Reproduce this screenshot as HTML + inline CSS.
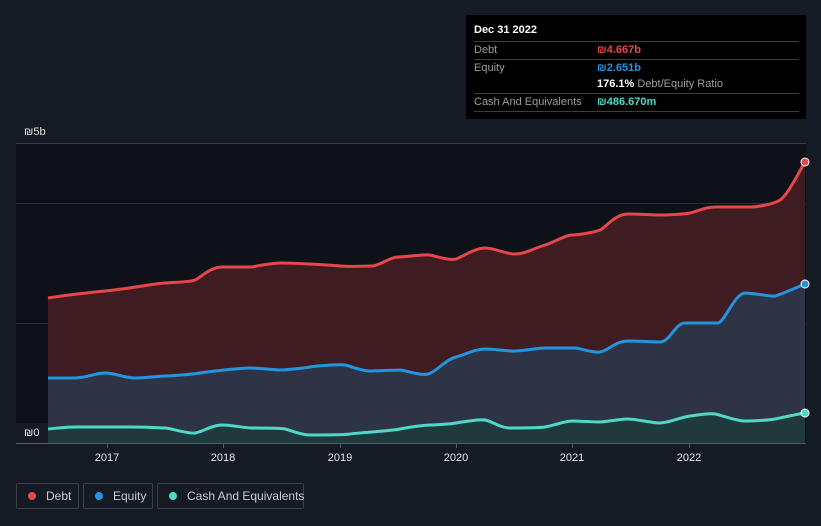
<!DOCTYPE html><html><head><style>
body{margin:0;width:821px;height:526px;background:#151b24;font-family:"Liberation Sans",sans-serif;overflow:hidden;position:relative}
.tt{position:absolute;left:466px;top:15px;width:340px;height:104px;background:#000;color:#fff;font-size:11px}
.r{position:absolute;left:8px;width:325px;border-top:1px solid #3a3d42;height:17px;line-height:17px;color:#9a9ca0}
.v{position:absolute;left:123px;font-weight:bold}
.lg{position:absolute;top:483px;height:26px;border:1px solid #3a3f48;border-radius:2px;color:#ccc;font-size:12px;line-height:24px;box-sizing:border-box;white-space:nowrap}
.lg i{display:inline-block;width:8px;height:8px;border-radius:50%;margin:0 10px 0 11px;vertical-align:0px}
</style></head><body>
<svg width="821" height="526" style="position:absolute;left:0;top:0">
<rect x="16" y="143" width="790" height="300" fill="#0e1117"/>
<line x1="16" y1="143.5" x2="806" y2="143.5" stroke="#3a3d42"/>
<line x1="16" y1="203.5" x2="806" y2="203.5" stroke="#2a2d33"/>
<line x1="16" y1="323.5" x2="806" y2="323.5" stroke="#2a2d33"/>
<path d="M48,298 C60,296 75,294 105,291 S150,284 165,283 S190,282 195,280 S210,267 222,267 S252,267 252,267 S270,263 282,263 S330,265 340,266 S365,266 372,266 S390,257 398,257 S425,254 430,255 S450,261 456,259 S475,248 485,248 S505,254 515,254 S535,248 545,245 S565,235 572,235 S595,232 600,230 S615,214 628,214 S650,215 660,215 S685,214 690,213 S705,207 715,207 S745,207 750,207 S772,205 780,200 S800,170 805,162 L805,443 L48,443Z" fill="#3f1c21"/>
<path d="M48,378 L75,378 C90,377 95,373 105,373 S125,378 135,378 S160,376 165,376 S195,374 200,373 S240,368 250,368 S275,370 280,370 S305,368 310,367 S340,364 345,365 S362,371 370,371 S395,370 400,370 S420,376 428,374 S445,360 456,357 S475,349 485,349 S505,351 515,351 S535,348 545,348 S570,348 575,348 S592,353 600,352 S615,341 628,341 S650,342 660,342 S675,323 685,323 S712,323 718,323 S735,293 745,293 S770,297 775,296 S800,286 805,284 L805,443 L48,443Z" fill="#2d3446"/>
<path d="M48,429 C60,428 65,427 75,427 L130,427 C150,427 160,428 165,428 S188,434 195,433 S212,425 222,425 S245,428 252,428 S280,428 285,429 S300,435 310,435 S345,435 350,434 S390,431 400,429 S425,425 430,425 S450,424 456,423 S478,419 485,420 S500,428 510,428 S538,428 545,427 S565,421 572,421 S595,422 600,422 S620,419 628,419 S652,423 660,423 S682,417 690,416 S708,413 715,414 S735,421 745,421 S770,420 775,419 S798,414 805,413 L805,443 L48,443Z" fill="#1f3a3c"/>
<g fill="none" stroke-width="3">
<path d="M48,298 C60,296 75,294 105,291 S150,284 165,283 S190,282 195,280 S210,267 222,267 S252,267 252,267 S270,263 282,263 S330,265 340,266 S365,266 372,266 S390,257 398,257 S425,254 430,255 S450,261 456,259 S475,248 485,248 S505,254 515,254 S535,248 545,245 S565,235 572,235 S595,232 600,230 S615,214 628,214 S650,215 660,215 S685,214 690,213 S705,207 715,207 S745,207 750,207 S772,205 780,200 S800,170 805,162" stroke="#e5474a"/>
<path d="M48,378 L75,378 C90,377 95,373 105,373 S125,378 135,378 S160,376 165,376 S195,374 200,373 S240,368 250,368 S275,370 280,370 S305,368 310,367 S340,364 345,365 S362,371 370,371 S395,370 400,370 S420,376 428,374 S445,360 456,357 S475,349 485,349 S505,351 515,351 S535,348 545,348 S570,348 575,348 S592,353 600,352 S615,341 628,341 S650,342 660,342 S675,323 685,323 S712,323 718,323 S735,293 745,293 S770,297 775,296 S800,286 805,284" stroke="#2394df"/>
<path d="M48,429 C60,428 65,427 75,427 L130,427 C150,427 160,428 165,428 S188,434 195,433 S212,425 222,425 S245,428 252,428 S280,428 285,429 S300,435 310,435 S345,435 350,434 S390,431 400,429 S425,425 430,425 S450,424 456,423 S478,419 485,420 S500,428 510,428 S538,428 545,427 S565,421 572,421 S595,422 600,422 S620,419 628,419 S652,423 660,423 S682,417 690,416 S708,413 715,414 S735,421 745,421 S770,420 775,419 S798,414 805,413" stroke="#4fd8c8"/>
</g>
<circle cx="805" cy="162" r="4" fill="#e5474a" stroke="#fff" stroke-width="1"/>
<circle cx="805" cy="284" r="4" fill="#2394df" stroke="#fff" stroke-width="1"/>
<circle cx="805" cy="413" r="4" fill="#4fd8c8" stroke="#fff" stroke-width="1"/>
<line x1="16" y1="443.5" x2="806" y2="443.5" stroke="#555a62"/>
<g stroke="#555a62"><line x1="107.5" y1="443" x2="107.5" y2="448"/><line x1="223.5" y1="443" x2="223.5" y2="448"/><line x1="340.5" y1="443" x2="340.5" y2="448"/><line x1="456.5" y1="443" x2="456.5" y2="448"/><line x1="572.5" y1="443" x2="572.5" y2="448"/><line x1="689.5" y1="443" x2="689.5" y2="448"/></g>
<rect x="16" y="423" width="32" height="20" fill="#151b24"/>
<g fill="#e6e6e6" font-size="11" font-family="Liberation Sans,sans-serif" text-anchor="middle"><text x="107" y="461">2017</text><text x="223" y="461">2018</text><text x="340" y="461">2019</text><text x="456" y="461">2020</text><text x="572" y="461">2021</text><text x="689" y="461">2022</text></g>
<text x="24" y="135" fill="#e6e6e6" font-size="11" font-family="Liberation Sans,sans-serif">₪5b</text>
<text x="24" y="436" fill="#e6e6e6" font-size="11" font-family="Liberation Sans,sans-serif">₪0</text>
</svg>
<div class="tt">
<div style="position:absolute;left:8px;top:9px;font-weight:bold;font-size:11px">Dec 31 2022</div>
<div class="r" style="top:26px">Debt<span class="v" style="color:#e5474a">₪4.667b</span></div>
<div class="r" style="top:44px">Equity<span class="v" style="color:#2394df">₪2.651b</span></div>
<div class="r" style="top:61px;border-top:none"><span class="v" style="color:#fff">176.1% <span style="color:#9a9ca0;font-weight:normal">Debt/Equity Ratio</span></span></div>
<div class="r" style="top:78px;border-bottom:1px solid #3a3d42">Cash And Equivalents<span class="v" style="color:#4fd8c8">₪486.670m</span></div>
</div>
<div class="lg" style="left:16px;width:63px"><i style="background:#e5474a"></i>Debt</div>
<div class="lg" style="left:83px;width:70px"><i style="background:#2394df"></i>Equity</div>
<div class="lg" style="left:157px;width:147px"><i style="background:#4fd8c8"></i>Cash And Equivalents</div>
</body></html>
